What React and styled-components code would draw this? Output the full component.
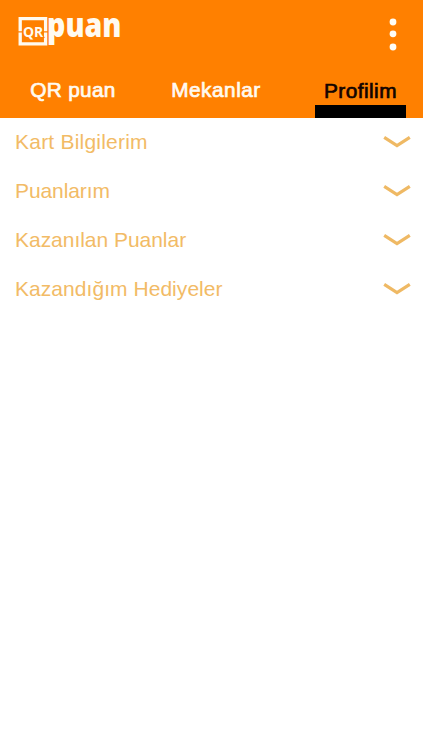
import React, { useState } from 'react';
import styled, { createGlobalStyle } from 'styled-components';

const GlobalStyle = createGlobalStyle`
  * {
    box-sizing: border-box;
  }
  body {
    margin: 0;
    background: #fff;
    font-family: 'Liberation Sans', Arial, sans-serif;
  }
  button {
    padding: 0;
    border: 0;
    background: none;
    font-family: inherit;
  }
`;

const Page = styled.div`
  min-height: 750px;
  background: #fff;
`;

const Header = styled.header`
  display: flex;
  flex-direction: column;
  justify-content: space-between;
  height: 117.7px;
  background: #ff8000;
`;

const TopBar = styled.div`
  display: flex;
  justify-content: space-between;
  padding: 0 25px 0 18px;
`;

const Logo = styled.svg`
  width: 106px;
  height: 52px;
  overflow: visible;
`;

const MenuButton = styled.button`
  display: flex;
  height: 52px;
`;

const Tabs = styled.nav`
  display: flex;
  gap: 39px;
  padding: 0 17px 0 18px;
`;

const Tab = styled.button`
  display: flex;
  align-items: flex-start;
  justify-content: center;
  width: ${({ $width }) => $width}px;
  height: 41px;
  padding-top: ${({ $active }) => ($active ? 2 : 1)}px;
  border-bottom: 13px solid ${({ $active }) => ($active ? '#000' : 'transparent')};
  color: ${({ $active }) => ($active ? '#120400' : '#fffaf0')};
  font-size: 20.8px;
  line-height: 24px;
  letter-spacing: ${({ $spacing }) => $spacing}px;
  white-space: nowrap;
  -webkit-text-stroke: 0.7px currentColor;

  &:last-child {
    margin-left: auto;
  }
`;

const List = styled.div`
  display: flex;
  flex-direction: column;
`;

const Row = styled.button`
  display: flex;
  align-items: center;
  justify-content: space-between;
  height: 48.9px;
  padding: 0 12px 0 15px;
  color: #f2bb66;
  font-size: 21px;
  letter-spacing: ${({ $spacing }) => $spacing}px;
`;

const tabs = [
  { name: 'QR puan', width: 110, spacing: 0.3 },
  { name: 'Mekanlar', width: 98, spacing: 0.5 },
  { name: 'Profilim', width: 91, spacing: 0.45 },
];

const rows = [
  { name: 'Kart Bilgilerim', spacing: 0.22 },
  { name: 'Puanlarım', spacing: -0.1 },
  { name: 'Kazanılan Puanlar', spacing: -0.03 },
  { name: 'Kazandığım Hediyeler', spacing: 0.05 },
];

function QrLogo() {
  return (
    <Logo viewBox="0 0 106 52" fill="#fffaf0">
      <path
        d="M2.2 31.2V18.7H27.6V31.2M2.2 32.5V43.9H27.6V32.5"
        fill="none"
        stroke="#fffaf0"
        strokeWidth="3.3"
      />
      <text
        x="4.9"
        y="37"
        fontFamily="Open Sans, sans-serif"
        fontSize="14.5"
        fontWeight="700"
        textLength="20.3"
        lengthAdjust="spacingAndGlyphs"
        stroke="#ff8000"
        strokeWidth="2"
        paintOrder="stroke"
      >
        QR
      </text>
      <text
        x="29"
        y="36.5"
        fontFamily="Open Sans, sans-serif"
        fontSize="34"
        fontWeight="800"
        textLength="74.5"
        lengthAdjust="spacingAndGlyphs"
      >
        puan
      </text>
    </Logo>
  );
}

export default function App() {
  const [active, setActive] = useState('Profilim');

  return (
    <Page>
      <GlobalStyle />
      <Header>
        <TopBar>
          <QrLogo />
          <MenuButton type="button" aria-label="Menu">
            <svg width="10" height="52" fill="#fffdf5">
              <circle cx="5" cy="22" r="3.4" />
              <circle cx="5" cy="33.8" r="3.4" />
              <circle cx="5" cy="47" r="3.4" />
            </svg>
          </MenuButton>
        </TopBar>
        <Tabs>
          {tabs.map((tab) => (
            <Tab
              key={tab.name}
              type="button"
              $active={active === tab.name}
              $width={tab.width}
              $spacing={tab.spacing}
              onClick={() => setActive(tab.name)}
            >
              {tab.name}
            </Tab>
          ))}
        </Tabs>
      </Header>
      <List>
        {rows.map((row) => (
          <Row key={row.name} type="button" $spacing={row.spacing}>
            {row.name}
            <svg width="28" height="14" fill="none" stroke="#efb964" strokeWidth="3.2">
              <path d="M1.2 2.4L14 10.6L26.8 2.4" />
            </svg>
          </Row>
        ))}
      </List>
    </Page>
  );
}
